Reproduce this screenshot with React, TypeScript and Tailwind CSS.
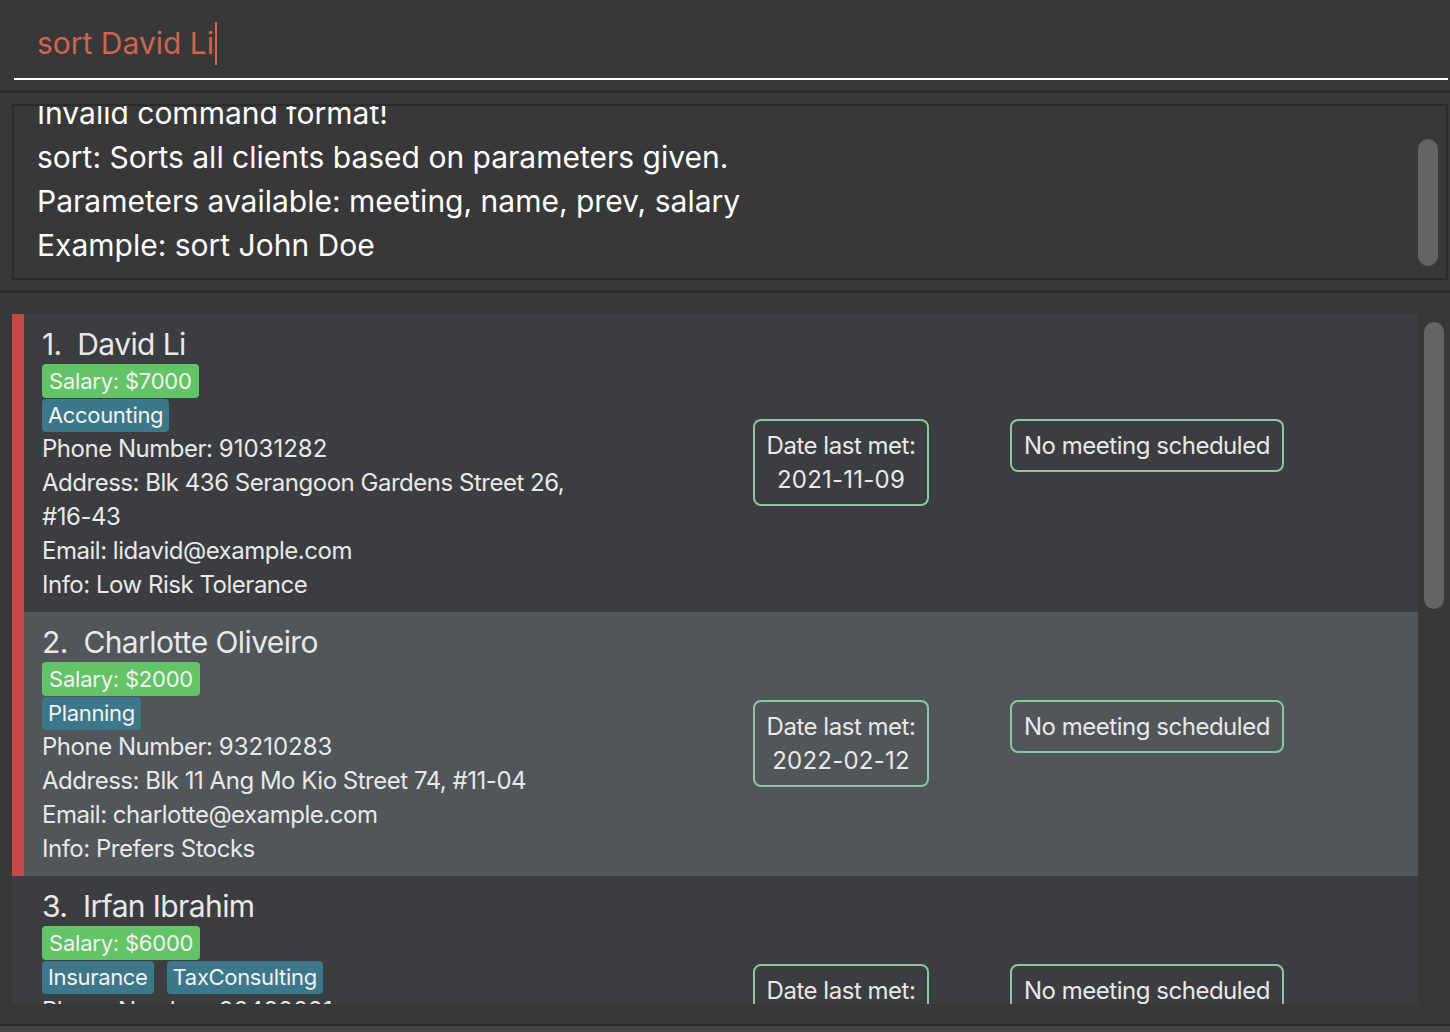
import React from "react";

type Client = {
  idx: number;
  name: string;
  salary: string;
  tags: string[];
  phone: string;
  address: string;
  email: string;
  info: string;
  lastMet: string;
  selected: boolean;
  marked: boolean;
};

const clients: Client[] = [
  {
    idx: 1,
    name: "David Li",
    salary: "$7000",
    tags: ["Accounting"],
    phone: "91031282",
    address: "Blk 436 Serangoon Gardens Street 26, #16-43",
    email: "lidavid@example.com",
    info: "Low Risk Tolerance",
    lastMet: "2021-11-09",
    selected: false,
    marked: true,
  },
  {
    idx: 2,
    name: "Charlotte Oliveiro",
    salary: "$2000",
    tags: ["Planning"],
    phone: "93210283",
    address: "Blk 11 Ang Mo Kio Street 74, #11-04",
    email: "charlotte@example.com",
    info: "Prefers Stocks",
    lastMet: "2022-02-12",
    selected: true,
    marked: true,
  },
  {
    idx: 3,
    name: "Irfan Ibrahim",
    salary: "$6000",
    tags: ["Insurance", "TaxConsulting"],
    phone: "92492021",
    address: "Blk 47 Tampines Street 20, #17-35",
    email: "irfan@example.com",
    info: "High Risk Tolerance",
    lastMet: "2021-12-01",
    selected: false,
    marked: false,
  },
];

function Card({ c }: { c: Client }) {
  return (
    <div
      className={`flex w-[1406px] shrink-0 ${c.selected ? "bg-[#50565a]" : "bg-[#3c3d40]"}`}
    >
      <div className={`w-[12px] shrink-0 ${c.marked ? "bg-[#c74848]" : ""}`} />
      <div className="grid grid-cols-[711px_257px_1fr] pl-[18px] pt-[12px] pb-[10px] flex-1">
        <div className="flex flex-col text-[#e8e8e8]">
          <div className="text-[30px] leading-[36px] mb-[2px] tracking-[-0.02em] whitespace-pre">
            {`${c.idx}.  ${c.name}`}
          </div>
          <div className="flex">
            <span className="h-[34px] leading-[34px] px-[7px] rounded-[4px] bg-[#62c466] text-[22px] text-[#f2f2f2] tracking-[-0.01em]">
              Salary: {c.salary}
            </span>
          </div>
          <div className="flex gap-[13px] mt-[1px]">
            {c.tags.map((t) => (
              <span
                key={t}
                className="h-[33px] leading-[33px] px-[6px] rounded-[4px] bg-[#3d788a] text-[22px] text-[#f2f2f2] tracking-[-0.015em]"
              >
                {t}
              </span>
            ))}
          </div>
          <div className="text-[24px] leading-[34px] tracking-[-0.02em] max-w-[560px]">
            <div>
              Phone Number: <span className="tracking-normal">{c.phone}</span>
            </div>
            <div>Address: {c.address}</div>
            <div>Email: {c.email}</div>
            <div>Info: {c.info}</div>
          </div>
        </div>
        <div className="self-center flex mb-[4px]">
          <div className="w-[176px] border-2 border-[#8dc59e] rounded-[8px] pt-[8px] pb-[7px] text-center text-[24px] leading-[34px] text-[#e8e8e8] tracking-[-0.02em]">
            <div>Date last met:</div>
            <div className="tracking-[0.01em]">{c.lastMet}</div>
          </div>
        </div>
        <div className="self-center flex h-[87px] items-start mb-[4px]">
          <div className="border-2 border-[#8dc59e] rounded-[8px] px-[12px] pt-[8px] pb-[7px] text-[24px] leading-[34px] text-[#e8e8e8] tracking-[-0.02em]">
            No meeting scheduled
          </div>
        </div>
      </div>
    </div>
  );
}

export default function App() {
  return (
    <div className="w-[1450px] h-[1032px] bg-[#383838] overflow-hidden flex flex-col font-['Inter',sans-serif]">
      {/* command box */}
      <div className="h-[90px] pl-[14px] pr-[2px] shrink-0">
        <div className="h-[80px] border-b-2 border-white pl-[23px] pt-[22px]">
          <div className="flex items-start h-[43px]">
            <span className="text-[30px] leading-[43px] text-[#d0644e]">
              sort David Li
            </span>
            <span className="w-[2px] h-[43px] bg-[#d0644e] ml-[1px]" />
          </div>
        </div>
      </div>
      <div className="h-[3px] bg-[#2a2a2a] shrink-0" />
      {/* result display */}
      <div className="h-[197px] pt-[11px] pl-[12px] pr-[2px] shrink-0">
        <div className="relative h-[176px] border-2 border-[#2b2b2b] overflow-hidden">
          <div className="pl-[23px] mt-[-15px] text-white text-[30px] leading-[44px]">
            <div>Invalid command format!</div>
            <div>sort: Sorts all clients based on parameters given.</div>
            <div>Parameters available: meeting, name, prev, salary</div>
            <div>Example: sort John Doe</div>
          </div>
          <div className="absolute right-[8px] top-[33px] w-[20px] h-[127px] rounded-[10px] bg-[#646464]" />
        </div>
      </div>
      <div className="h-[3px] bg-[#2a2a2a] shrink-0" />
      {/* list */}
      <div className="relative h-[731px] pt-[21px] shrink-0">
        <div className="ml-[12px] h-[690px] overflow-hidden flex flex-col">
          {clients.map((c) => (
            <Card key={c.idx} c={c} />
          ))}
        </div>
        <div className="absolute left-[1424px] top-[29px] w-[20px] h-[287px] rounded-[10px] bg-[#646464]" />
      </div>
      <div className="h-[2px] bg-[#2a2a2a] shrink-0" />
      <div className="flex-1 bg-[#464646]" />
    </div>
  );
}
